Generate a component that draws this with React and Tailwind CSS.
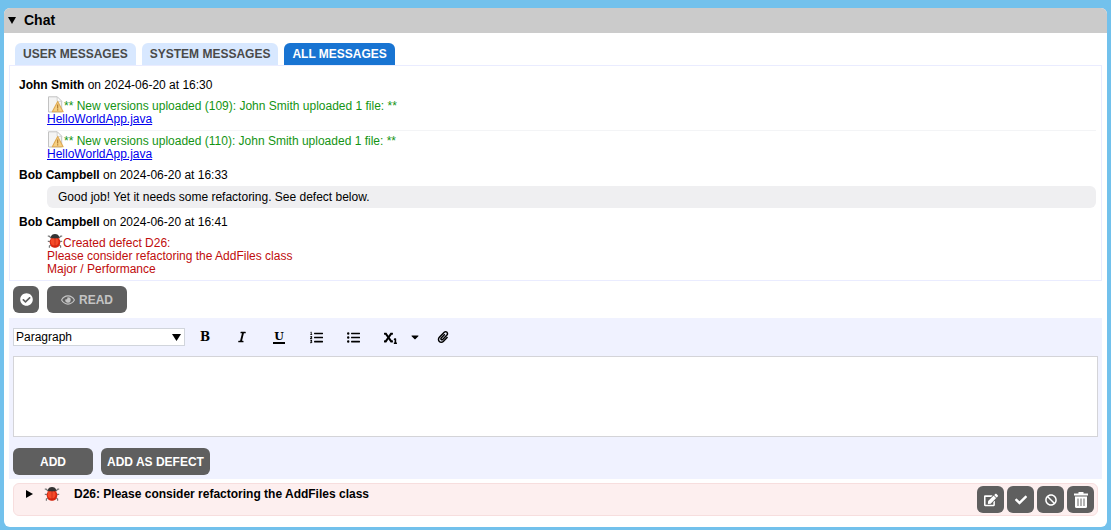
import { useState } from "react";
import { FaItalic, FaListOl, FaListUl, FaSubscript, FaCaretDown, FaPaperclip, FaCheckCircle, FaRegEye, FaEdit, FaCheck, FaBan } from "react-icons/fa";

const tabs = ["USER MESSAGES", "SYSTEM MESSAGES", "ALL MESSAGES"];

const WarningFileIcon = () => (
  <svg viewBox="0 0 17 17" className="h-[17px] w-[17px] shrink-0" aria-hidden="true">
    <path d="M1.5.8h8.7l4.500 4.500v10.700H1.500z" fill="#f4f4f4" stroke="#c2c2c2" strokeWidth="1" />
    <path d="M10.200.8v4.500h4.500z" fill="#fff" stroke="#c8c8c8" strokeWidth=".8" />
    <path d="M10.700 5.400l5.400 10.400H5.300z" fill="#f6d083" stroke="#dfab55" strokeWidth="1.100" strokeLinejoin="round" />
    <path d="M10.700 8.500v3.900M10.700 13.300v1.300" stroke="#a8742c" strokeWidth="1.100" />
  </svg>
);

const BugIcon = () => (
  <svg viewBox="0 0 16 16" className="h-4 w-4 shrink-0" aria-hidden="true">
    <path d="M4 5L2.200 3.200H.8M12 5l1.800-1.800h1.400M4 8.300H.8M12 8.300h3.200M4.400 11.500l-2 1.500v1.800M11.600 11.500l2 1.500v1.800" fill="none" stroke="#777" strokeWidth="1.200" />
    <ellipse cx="8" cy="9.200" rx="5.300" ry="5.600" fill="#d9260f" />
    <ellipse cx="7.600" cy="8.600" rx="3.900" ry="3.900" fill="#f54a28" />
    <path d="M3.600 4.600C4 2 6 1 8 1s4 1 4.400 3.600C10.600 5.800 5.400 5.800 3.600 4.600z" fill="#333" />
    <path d="M8 5.500v9" stroke="#b92210" strokeWidth=".6" />
  </svg>
);

const TrashIcon = () => (
  <svg viewBox="0 0 14 16" className="h-4 w-[14px]" aria-hidden="true">
    <path d="M4.500 0h5v1.500H14v2H0v-2h4.500z" fill="currentColor" />
    <path d="M1 4.500h12V14.500a1.500 1.500 0 0 1-1.500 1.500h-9A1.500 1.500 0 0 1 1 14.500z" fill="currentColor" />
    <path d="M4 6.500v7.500M7 6.500v7.500M10 6.500v7.500" stroke="#777" strokeWidth="1.100" />
  </svg>
);

const MessageHeading = ({ author, date }) => (
  <p className="mb-1 leading-[13px]">
    <b>{author}</b> on {date}
  </p>
);

const Upload = ({ version }) => (
  <div>
    <div className="flex items-center text-[#149414]">
      <WarningFileIcon />
      <span className="pt-1 leading-[13px]">** New versions uploaded ({version}): John Smith uploaded 1 file: **</span>
    </div>
    <a href="#file" className="block w-fit leading-[13px] text-[#0000ee] underline">
      HelloWorldApp.java
    </a>
  </div>
);

const toolbar = [
  { label: "Bold", icon: <span className="font-['DejaVu_Serif',serif] text-xs font-bold">B</span> },
  { label: "Italic", icon: <FaItalic className="size-3" /> },
  {
    label: "Underline",
    icon: <span className="border-b-2 border-black px-px font-['DejaVu_Serif',serif] text-[11px] leading-[11px] font-bold">U</span>,
  },
  { label: "Numbered list", icon: <FaListOl className="size-[13px]" /> },
  { label: "Bulleted list", icon: <FaListUl className="size-[13px]" /> },
  { label: "Subscript", icon: <FaSubscript className="size-[13px]" /> },
];

const buttonStyle = "flex h-[27px] items-center justify-center rounded-md bg-[#5f5f5f] font-bold";

const App = () => {
  const [activeTab, setActiveTab] = useState("ALL MESSAGES");
  const [message, setMessage] = useState("");

  return (
    <div className="min-h-screen bg-[#72c1ec] px-1 pt-2 pb-1 font-['Liberation_Sans',Arial,sans-serif] text-xs text-black">
      <main className="overflow-hidden rounded-md bg-white pb-[11px]">
        <button type="button" className="flex h-[25px] w-full items-center gap-2 bg-[#cbcbcb] px-1 pb-px text-sm font-bold">
          <svg viewBox="0 0 8 7" className="h-[7px] w-2" aria-hidden="true">
            <path d="M0 0h8L4 7z" />
          </svg>
          Chat
        </button>

        <div className="px-[5px] pt-[10px]">
          {/* message filters */}
          <div className="flex gap-1.5 px-1.5">
            {tabs.map((tab) => (
              <button
                key={tab}
                type="button"
                onClick={() => setActiveTab(tab)}
                className={`h-[22px] rounded-t-md px-2 font-bold ${tab === activeTab ? "bg-[#1874d2] text-white" : "bg-[#d8e8ff] text-[#4a4a4a]"}`}
              >
                {tab}
              </button>
            ))}
          </div>

          {/* messages */}
          <section className="flex flex-col gap-2 border border-[#eaecff] pt-[13px] pr-[5px] pb-1 pl-[9px]">
            <article>
              <MessageHeading author="John Smith" date="2024-06-20 at 16:30" />
              <div className="ml-7 flex flex-col gap-1">
                <Upload version="109" />
                <hr className="-mb-1 border-gray-100" />
                <Upload version="110" />
              </div>
            </article>
            <article>
              <MessageHeading author="Bob Campbell" date="2024-06-20 at 16:33" />
              <p className="ml-7 rounded-md bg-[#efeff1] px-[11px] leading-[22px]">
                Good job! Yet it needs some refactoring. See defect below.
              </p>
            </article>
            <article>
              <MessageHeading author="Bob Campbell" date="2024-06-20 at 16:41" />
              <div className="ml-7 leading-[13px] text-[#c00c0c]">
                <div className="flex h-[17px] items-start">
                  <BugIcon />
                  <span className="pt-1">Created defect D26:</span>
                </div>
                <p>Please consider refactoring the AddFiles class</p>
                <p>Major / Performance</p>
              </div>
            </article>
          </section>

          <div className="flex gap-2 px-1 py-[5px]">
            <button type="button" aria-label="Accept" className={`${buttonStyle} w-[26px] text-white`}>
              <FaCheckCircle className="size-[13px]" />
            </button>
            <button type="button" className={`${buttonStyle} w-20 gap-1 text-[#c4c4c4]`}>
              <FaRegEye className="size-[14px]" />
              READ
            </button>
          </div>

          {/* editor */}
          <form className="bg-[#f0f2ff] px-1 pt-2.5 pb-1" onSubmit={(e) => e.preventDefault()}>
            <div className="mb-2.5 flex h-[18px] items-center">
              <div className="relative mr-2">
                <select aria-label="Text style" className="block h-[18px] w-[172px] appearance-none border border-gray-300 bg-white pl-0.5 leading-4">
                  <option>Paragraph</option>
                </select>
                <svg viewBox="0 0 9 7" className="pointer-events-none absolute top-1.5 right-1 h-[7px] w-[9px]" aria-hidden="true">
                  <path d="M0 0h9L4.500 7z" />
                </svg>
              </div>
              <div className="flex gap-[13px]">
                {toolbar.map(({ label, icon }) => (
                  <button key={label} type="button" aria-label={label} className="flex h-4 w-6 items-center justify-center">
                    {icon}
                  </button>
                ))}
              </div>
              <button type="button" aria-label="More scripts" className="ml-px flex w-6 justify-center">
                <FaCaretDown className="size-3" />
              </button>
              <button type="button" aria-label="Attach file" className="ml-1 flex w-6 justify-center">
                <FaPaperclip className="size-3" />
              </button>
            </div>
            <textarea
              aria-label="Message"
              className="block h-[81px] w-full resize-none border border-[#d4d4d8] bg-white p-1 outline-none"
              value={message}
              onChange={(e) => setMessage(e.target.value)}
            />
            <div className="mt-[11px] flex gap-2">
              <button type="submit" className={`${buttonStyle} w-20 text-white`}>ADD</button>
              <button type="button" className={`${buttonStyle} px-1.5 text-white`}>ADD AS DEFECT</button>
            </div>
          </form>

          {/* defect */}
          <section className="mx-1 mt-1 flex items-start rounded-md border border-[#f7dede] bg-[#fdefef] py-0.5 pr-[3px] pl-3">
            <button type="button" aria-label="Expand defect" className="mt-0.5 flex h-3 w-[18px] items-center">
              <svg viewBox="0 0 7 8" className="h-2 w-[7px]" aria-hidden="true">
                <path d="M0 0v8l7-4z" />
              </svg>
            </button>
            <BugIcon />
            <h2 className="ml-[14px] flex-1 font-bold">D26: Please consider refactoring the AddFiles class</h2>
            <div className="flex gap-[3px] text-white">
              <button type="button" aria-label="Edit" className={`${buttonStyle} w-[27px]`}>
                <FaEdit className="size-[14px]" />
              </button>
              <button type="button" aria-label="Mark as fixed" className={`${buttonStyle} w-[27px]`}>
                <FaCheck className="size-3" />
              </button>
              <button type="button" aria-label="Reject" className={`${buttonStyle} w-[27px]`}>
                <FaBan className="size-3" />
              </button>
              <button type="button" aria-label="Delete" className={`${buttonStyle} w-[27px]`}>
                <TrashIcon />
              </button>
            </div>
          </section>
        </div>
      </main>
    </div>
  );
};

export default App;
